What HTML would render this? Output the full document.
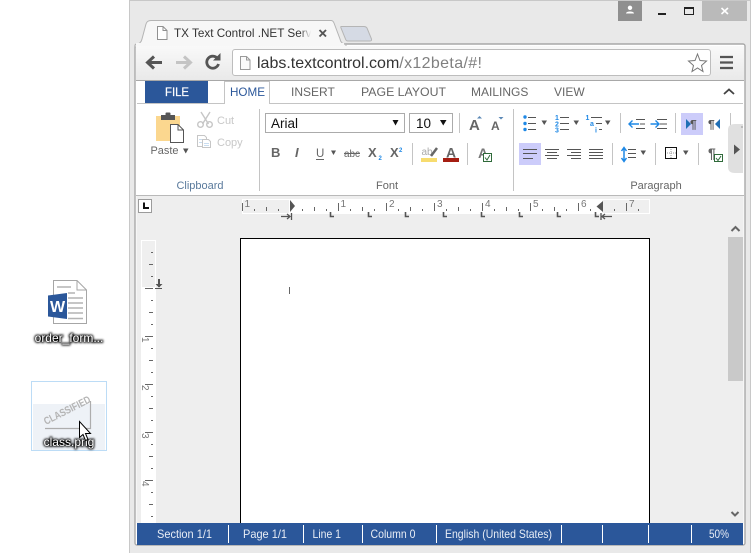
<!DOCTYPE html>
<html><head><meta charset="utf-8"><style>
html,body{margin:0;padding:0;background:#fff;width:751px;height:553px;overflow:hidden}
svg{display:block}
text{font-family:"Liberation Sans",sans-serif}
</style></head><body>
<svg width="751" height="553" viewBox="0 0 751 553" xmlns="http://www.w3.org/2000/svg">
<defs>
<linearGradient id="tb" x1="0" y1="0" x2="0" y2="1"><stop offset="0" stop-color="#f9f9f9"/><stop offset="1" stop-color="#e9e9e9"/></linearGradient>
<linearGradient id="fade" x1="0" y1="0" x2="1" y2="0"><stop offset="0" stop-color="#f7f7f7" stop-opacity="0"/><stop offset="1" stop-color="#f7f7f7"/></linearGradient>
<filter id="sh" x="-20%" y="-50%" width="140%" height="200%"><feGaussianBlur stdDeviation="1"/></filter>
</defs>
<!-- desktop icons -->
<rect x="31.500" y="381.500" width="75" height="69" fill="#fff" stroke="#bcdcf6"/>
<rect x="33" y="404" width="72" height="46" fill="#eef2f7"/>
<text transform="translate(46 425) rotate(-27)" font-size="10.500" font-weight="bold" fill="#b4b4b4" textLength="51" lengthAdjust="spacingAndGlyphs">CLASSIFIED</text>
<path d="M45 428.500H90.500V401" fill="none" stroke="#adadad" stroke-width="1.200"/>
<path d="M53.500 280.500H77L86.500 290V323.500H53.500Z" fill="#fff" stroke="#a6a6a6"/>
<path d="M77 280.500V290H86.500" fill="none" stroke="#a6a6a6"/>
<path d="M57 287H71M68 293H75M68 298H83M68 303H83M68 308H83M68 313H83M68 318.500H83" stroke="#b4b4b4" fill="none" stroke-width="1.400"/>
<path d="M48 295.500L67 293V319L48 316.500Z" fill="#2b579a"/>
<text x="57.500" y="312" text-anchor="middle" font-size="16" font-weight="bold" fill="#fff">W</text>
<g font-size="12" text-anchor="middle">
<text x="69" y="342" fill="#000" filter="url(#sh)" stroke="#000" stroke-width="1.800">order_form...</text>
<text x="69" y="342" fill="#fff">order_form...</text>
<text x="69" y="446" fill="#000" filter="url(#sh)" stroke="#000" stroke-width="1.800">class.png</text>
<text x="69" y="446" fill="#fff">class.png</text>
</g>
<path d="M79.500 421.500V437.500L83 434.500L85.500 440.500L88 439.500L85.500 433.500H90.500Z" fill="#fff" stroke="#000" stroke-width="1"/>

<!-- window -->
<rect x="129.500" y="0.500" width="621" height="553" fill="#e9e9e9" stroke="#c8c8c8"/>
<rect x="618" y="1" width="24" height="20" fill="#8f8f8f"/>
<circle cx="630" cy="7.800" r="2.200" fill="#fff"/><path d="M626 13.500C626 10.800 634 10.800 634 13.500Z" fill="#fff"/>
<rect x="658" y="13" width="8" height="2" fill="#222"/>
<rect x="684.500" y="8" width="9" height="6.500" fill="none" stroke="#222" stroke-width="1"/><rect x="684" y="7" width="10" height="2" fill="#222"/>
<rect x="702" y="1" width="45" height="20" fill="#bababa"/>
<path d="M721.500 8L728 14M728 8L721.500 14" stroke="#fff" stroke-width="1.600"/>
<!-- inner -->
<rect x="135" y="44" width="610" height="501" rx="2" fill="#fff" stroke="#a8a8a8" stroke-width="1.400"/>
<!-- tabs -->
<path d="M341 26.500H364Q366 26.500 367 28L371.500 39Q372 41 370 41H348Q346 41 345.500 39L341 28Q340.500 26.500 341 26.500Z" fill="#d5dae4" stroke="#b5b5b5"/>
<path d="M135 45Q141 44 142 39L146 24Q147 20.500 151 20.500H331Q333 20.500 334 23L340 39Q341 44 346 44.500L346 47H135Z" fill="#f7f7f7" stroke="#b4b4b4"/>
<rect x="136" y="43" width="208" height="5" fill="#f7f7f7"/>
<path d="M157.500 26.500H163L167 30.500V39.500H157.500Z" fill="#fff" stroke="#909090"/><path d="M163 26.500V30.500H167" fill="none" stroke="#909090"/>
<text x="174" y="37" font-size="12" fill="#333" textLength="144" lengthAdjust="spacingAndGlyphs">TX Text Control .NET Serve</text>
<rect x="300" y="25" width="11" height="16" fill="url(#fade)"/>
<rect x="311" y="25" width="8" height="16" fill="#f7f7f7"/>
<path d="M319.500 30L326 36.500M326 30L319.500 36.500" stroke="#555" stroke-width="1.900"/>
<!-- toolbar -->
<rect x="136" y="46" width="608" height="34" fill="url(#tb)"/>
<path d="M136 80.500H744" stroke="#a8a8a8"/>
<path d="M148 62.500H162M154 56.500L147.500 62.500L154 68.500" fill="none" stroke="#555" stroke-width="3"/>
<path d="M176 62.500H190M184 56.500L190.500 62.500L184 68.500" fill="none" stroke="#c4c4c4" stroke-width="3"/>
<path d="M217.500 58.500A6 6 0 1 0 218.500 64" fill="none" stroke="#555" stroke-width="2.800"/>
<path d="M213 60.500H220.500V53Z" fill="#555"/>
<rect x="232.500" y="49.500" width="478" height="26" rx="2.500" fill="#fff" stroke="#bdbdbd"/>
<path d="M240.500 56.500H246.500L250 60V69.500H240.500Z" fill="#fafafa" stroke="#9a9a9a"/><path d="M246.500 56.500V60H250" fill="none" stroke="#9a9a9a"/>
<text x="257" y="68" font-size="16" fill="#333">labs.textcontrol.com<tspan fill="#808080" letter-spacing="0.350">/x12beta/#!</tspan></text>
<path d="M697.500 54L700 60.500L706.500 61L701.500 65.500L703 71.500L697.500 68L692 71.500L693.500 65.500L688.500 61L695 60.500Z" fill="#fff" stroke="#777" stroke-width="1"/>
<path d="M720 57H733M720 62.500H733M720 68H733" stroke="#555" stroke-width="2.200"/>
<!-- ribbon tabs -->
<rect x="136" y="81" width="608" height="114" fill="#fff"/>
<rect x="145" y="81" width="63" height="23" fill="#2b579a"/>
<text x="165" y="96" font-size="12" fill="#fff" stroke="#fff" stroke-width="0.200" textLength="24" lengthAdjust="spacingAndGlyphs">FILE</text>
<path d="M137 103.500H224.500V81.500H269.500V103.500H743" fill="none" stroke="#c4c4c4"/>
<g font-size="12" fill="#666">
<text x="230" y="96" fill="#2b579a" textLength="35" lengthAdjust="spacingAndGlyphs">HOME</text>
<text x="291" y="96">INSERT</text>
<text x="361" y="96" textLength="85" lengthAdjust="spacingAndGlyphs">PAGE LAYOUT</text>
<text x="471" y="96">MAILINGS</text>
<text x="554" y="96">VIEW</text>
</g>
<path d="M724 94L729 89.500L734 94" fill="none" stroke="#444" stroke-width="1.800"/>
<!-- separators -->
<path d="M259.500 109V191M513.500 109V191M459.500 113V133M620.500 113V133M675.500 113V133M730.500 113V133M412.500 143V165M467.500 143V165M612.500 143V165M655.500 143V165M698.500 143V165" stroke="#c4c4c4"/>
<path d="M136 195.500H744" stroke="#b9b9b9"/>
<!-- clipboard -->
<path d="M156 116H180V141H156Z" fill="#fbd78f"/>
<rect x="161" y="115" width="14" height="5" fill="#555"/><rect x="165.500" y="112.500" width="5" height="3" rx="1" fill="#555"/>
<path d="M170.500 124.500H178L183.500 130V142.500H170.500Z" fill="#fff" stroke="#555"/><path d="M178 124.500V130H183.500" fill="none" stroke="#555"/>
<text x="150.500" y="154" font-size="11" fill="#666" textLength="28" lengthAdjust="spacingAndGlyphs">Paste</text>
<path d="M183 148.500H188.500L185.750 153.500Z" fill="#555"/>
<g stroke="#c6c6c6" fill="none" stroke-width="1.400"><path d="M201 112L208.500 124M210 112L202.500 124"/><circle cx="200.500" cy="124.500" r="2.800"/><circle cx="209.500" cy="124.500" r="2.800"/></g>
<path d="M197.500 135.500H204.500L206.500 137.500V146.500H197.500Z" fill="#fff" stroke="#c6c6c6"/><path d="M202.500 139.500H208.500L210.500 141.500V147.500H202.500Z" fill="#fff" stroke="#c6c6c6"/>
<path d="M199 139.500H202M199 142.500H202M204 143.500H209M204 145.500H209" stroke="#c9ddf0"/>
<text x="217" y="124" font-size="11" fill="#c8c8c8">Cut</text>
<text x="217" y="146" font-size="11" fill="#c8c8c8">Copy</text>
<text x="200" y="189" text-anchor="middle" font-size="11" fill="#5a7a9c">Clipboard</text>
<!-- font -->
<rect x="265.500" y="113.500" width="139" height="19" fill="#fff" stroke="#ababab"/>
<text x="271" y="128" font-size="13.500" fill="#111">Arial</text>
<path d="M392.500 120H398.500L395.500 125.500Z" fill="#111"/>
<rect x="409.500" y="113.500" width="43" height="19" fill="#fff" stroke="#ababab"/>
<text x="416" y="128" font-size="13.500" fill="#111">10</text>
<path d="M440 120H446.500L443.250 125.500Z" fill="#111"/>
<text x="469" y="130" font-size="15" font-weight="bold" fill="#666">A</text>
<path d="M477 118.500H482L479.500 116Z" fill="#5a87b5"/>
<text x="491" y="130" font-size="12" font-weight="bold" fill="#666">A</text>
<path d="M498.500 117H503.500L501 119.500Z" fill="#5a87b5"/>
<g fill="#666">
<text x="271" y="157" font-size="13" font-weight="bold">B</text>
<text x="295" y="157" font-size="13" font-weight="bold" font-style="italic">I</text>
<text x="316" y="157" font-size="11.500">U</text>
<path d="M316 159.500H324" stroke="#666"/>
<path d="M331 150.500H336L333.500 155Z" fill="#555"/>
<text x="344" y="157" font-size="10" textLength="16" lengthAdjust="spacingAndGlyphs">abc</text>
<path d="M344 153.500H360" stroke="#666"/>
<text x="368" y="157" font-size="13" font-weight="bold">X</text>
<text x="378.500" y="160" font-size="6" font-weight="bold" fill="#1e88e5">2</text>
<text x="390" y="157" font-size="13" font-weight="bold">X</text>
<text x="399" y="152" font-size="6" font-weight="bold" fill="#1e88e5">2</text>
</g>
<rect x="421" y="158" width="16" height="4" fill="#f7dc6f"/>
<text x="421.500" y="155" font-size="10" fill="#aaa">ab</text>
<path d="M431 156L437 148" stroke="#666" stroke-width="2.500"/>
<rect x="443" y="158" width="16" height="4" fill="#a51e12"/>
<text x="446" y="157.500" font-size="14" font-weight="bold" fill="#666">A</text>
<text x="478" y="158" font-size="14" font-weight="bold" fill="#777">A</text>
<rect x="483.500" y="153.500" width="8" height="8" fill="#fff" stroke="#2f6a3a"/><path d="M485 157.500L487 160L490 155" fill="none" stroke="#2f6a3a"/>
<text x="387" y="189" text-anchor="middle" font-size="11" fill="#666">Font</text>
<!-- paragraph row 1 -->
<rect x="681" y="113" width="22" height="22" fill="#ccccfa"/>
<rect x="519" y="143" width="22" height="22" fill="#ccccfa"/>
<g fill="#1e88e5">
<circle cx="525" cy="117" r="1.700"/><circle cx="525" cy="123.500" r="1.700"/><circle cx="525" cy="129.500" r="1.700"/>
<text x="555" y="120" font-size="7" font-weight="bold">1</text><text x="555" y="126.500" font-size="7" font-weight="bold">2</text><text x="555" y="132.500" font-size="7" font-weight="bold">3</text>
<text x="585.500" y="120" font-size="7" font-weight="bold">1</text><text x="590" y="126" font-size="7" font-weight="bold">a</text><text x="595" y="132.500" font-size="7" font-weight="bold">i</text>
</g>
<path d="M528 117.500H536M528 123.500H536M528 129.500H536M560 117.500H569M560 123.500H569M560 129.500H569M591 117.500H602M596 123.500H602M599 129.500H602" stroke="#555"/>
<path d="M541.500 120.500H547L544.250 125Z M573.500 120.500H579L576.250 125Z M605 120.500H610.500L607.750 125Z" fill="#555"/>
<path d="M636 119.500H645M640 124H645M636 128.500H645" stroke="#555"/>
<path d="M629.500 124H639M632.500 120.500L629 124L632.500 127.500" stroke="#1e88e5" stroke-width="1.400" fill="none"/>
<path d="M657 119.500H667M660 124H667M657 128.500H667" stroke="#555"/>
<path d="M650.500 124H658.500M655.500 120.500L659 124L655.500 127.500" stroke="#1e88e5" stroke-width="1.400" fill="none"/>
<path d="M686 119V129L691 124Z" fill="#1f6fb5"/>
<text x="690" y="128.500" font-size="12" font-weight="bold" fill="#555">¶</text>
<text x="708" y="128.500" font-size="12" font-weight="bold" fill="#555">¶</text>
<path d="M720 119V129L715 124Z" fill="#1f6fb5"/>
<!-- paragraph row 2 -->
<path d="M523 149.500H537M523 153.500H537M523 158.500H533" stroke="#555"/>
<path d="M545 149.500H559M547 152.500H557M545 155.500H559M547 158.500H557" stroke="#555"/>
<path d="M567 149.500H581M571 152.500H581M567 155.500H581M571 158.500H581" stroke="#555"/>
<path d="M589 149.500H603M589 152.500H603M589 155.500H603M589 158.500H603" stroke="#555"/>
<path d="M624 148V161M621.500 151L624 147.500L626.500 151M621.500 158L624 161.500L626.500 158" fill="none" stroke="#1e88e5" stroke-width="1.500"/>
<path d="M628 149.500H636M628 153.500H636M628 157.500H636" stroke="#555"/>
<path d="M640.500 150.500H646L643.250 155Z" fill="#555"/>
<rect x="665.500" y="147.500" width="11" height="11" fill="#fff" stroke="#111"/>
<path d="M671 149V158M667 153H676" stroke="#999" stroke-dasharray="1 1"/>
<path d="M683 150.500H688.500L685.750 155Z" fill="#555"/>
<text x="708" y="158" font-size="14" font-weight="bold" fill="#666">¶</text>
<rect x="714.500" y="154.500" width="8" height="7" fill="#fff" stroke="#2f6a3a"/><path d="M716 158L718 160.500L721 156" fill="none" stroke="#2f6a3a"/>
<text x="656" y="189" text-anchor="middle" font-size="11" fill="#666">Paragraph</text>
<path d="M743 124H735Q728 124 728 130V167Q728 173 735 173H743Z" fill="#e0e0e0"/>
<path d="M734 144.500V154.500L740 149.500Z" fill="#555"/>
<rect x="741" y="126" width="2" height="2" fill="#bbb"/>
<!-- workspace -->
<rect x="136.500" y="196" width="607" height="327" fill="#eeeeee"/>
<rect x="138.500" y="199.500" width="13" height="13" fill="#fff" stroke="#9b9b9b"/>
<path d="M144 202.500V208H149" fill="none" stroke="#111" stroke-width="2"/>
<!-- h ruler -->
<rect x="242" y="199" width="408" height="15" fill="#fff"/>
<rect x="242.500" y="199.500" width="47" height="14" fill="#efefef" stroke="#fff"/>
<rect x="602" y="199.500" width="47.500" height="14" fill="#efefef" stroke="#fff"/>
<path d="M242.500 203V211M338.500 203V211M386.500 203V211M434.500 203V211M482.500 203V211M530.500 203V211M578.500 203V211M626.500 203V211M266.500 207V211M314.500 207V211M362.500 207V211M410.500 207V211M458.500 207V211M506.500 207V211M554.500 207V211M602.500 207V211M254.500 209V211M278.500 209V211M302.500 209V211M326.500 209V211M350.500 209V211M374.500 209V211M398.500 209V211M422.500 209V211M446.500 209V211M470.500 209V211M494.500 209V211M518.500 209V211M542.500 209V211M566.500 209V211M590.500 209V211M614.500 209V211M638.500 209V211" stroke="#666"/>
<g font-size="10" fill="#777">
<text x="244.500" y="207">1</text><text x="340.500" y="207">1</text><text x="389" y="207">2</text><text x="437" y="207">3</text><text x="485" y="207">4</text><text x="533" y="207">5</text><text x="581" y="207">6</text><text x="629" y="207">7</text>
</g>
<path d="M290 200V206L295 206ZM290 206V212L295 206Z" fill="#555"/>
<path d="M603 201V212L596.500 206.500Z" fill="#555"/>
<path d="M281 216.500H290M287 214L290 216.500L287 219M291.500 213V220" fill="none" stroke="#555" stroke-width="1.300"/>
<path d="M612 216.500H602M605 214L602 216.500L605 219M601 213V220" fill="none" stroke="#555" stroke-width="1.300"/>
<path d="M330.500 212V216.500H334M368.500 212V216.500H372M405.500 212V216.500H409M443.500 212V216.500H447M481.500 212V216.500H485M519.500 212V216.500H523M557.500 212V216.500H561M595.500 212V216.500H599" fill="none" stroke="#555" stroke-width="1.600"/>
<!-- v ruler -->
<rect x="141" y="240" width="15" height="283" fill="#fff"/>
<rect x="141.500" y="240.500" width="14" height="47" fill="#efefef" stroke="#fff"/>
<path d="M145 288.500H153M145 336.500H153M145 384.500H153M145 432.500H153M145 480.500H153M149 264.500H153M149 312.500H153M149 360.500H153M149 408.500H153M149 456.500H153M149 504.500H153M151 252.500H153M151 276.500H153M151 300.500H153M151 324.500H153M151 348.500H153M151 372.500H153M151 396.500H153M151 420.500H153M151 444.500H153M151 468.500H153M151 492.500H153M151 516.500H153" stroke="#666"/>
<g font-size="10" fill="#777">
<text transform="translate(142 337) rotate(90)">1</text>
<text transform="translate(142 385) rotate(90)">2</text>
<text transform="translate(142 433) rotate(90)">3</text>
<text transform="translate(142 481) rotate(90)">4</text>
</g>
<path d="M159 279V287" stroke="#555" stroke-width="2"/>
<path d="M155.500 284H162.500L159 287.500Z M155 288H162V289H155Z" fill="#555"/>
<!-- page -->
<rect x="240.500" y="238.500" width="409" height="300" fill="#fff" stroke="#000"/>
<rect x="289" y="287" width="1" height="7" fill="#666"/>
<!-- scrollbar -->
<path d="M731.500 231L735.500 227L739.500 231" fill="none" stroke="#666" stroke-width="2"/>
<rect x="728" y="237" width="15" height="144" fill="#c9c9c9"/>
<path d="M731.500 512L735 515.500L738.500 512" fill="none" stroke="#666" stroke-width="2"/>
<!-- status -->
<rect x="137" y="523" width="606" height="22" fill="#2b579a"/>
<path d="M228.500 525V543M303.500 525V543M362.500 525V543M436.500 525V543M561.500 525V543M602.500 525V543M648.500 525V543M691.500 525V543" stroke="#fff"/>
<g font-size="12" fill="#e8edf5">
<text x="157" y="538" textLength="55" lengthAdjust="spacingAndGlyphs">Section 1/1</text>
<text x="243" y="538" textLength="44" lengthAdjust="spacingAndGlyphs">Page 1/1</text>
<text x="312.500" y="538" textLength="28.500" lengthAdjust="spacingAndGlyphs">Line 1</text>
<text x="370.500" y="538" textLength="45" lengthAdjust="spacingAndGlyphs">Column 0</text>
<text x="445" y="538" textLength="107" lengthAdjust="spacingAndGlyphs">English (United States)</text>
<text x="709" y="538" textLength="20" lengthAdjust="spacingAndGlyphs">50%</text>
</g>
</svg>
</body></html>
